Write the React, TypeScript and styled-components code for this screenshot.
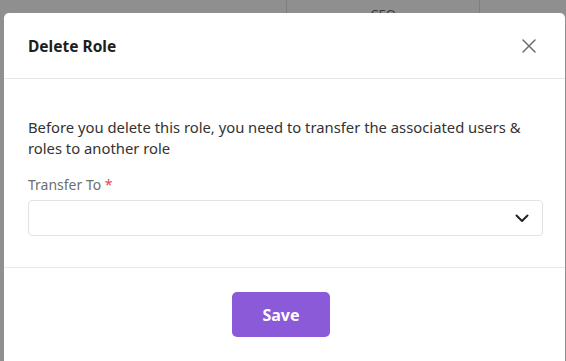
import React from "react";
import styled, { createGlobalStyle } from "styled-components";

const Global = createGlobalStyle`
  html, body { margin: 0; padding: 0; }
  body {
    width: 566px;
    height: 361px;
    overflow: hidden;
    background: #8f8f8f;
    font-family: "Noto Sans", "Open Sans", sans-serif;
  }
`;

const Page = styled.div`
  position: relative;
  width: 566px;
  height: 361px;
  overflow: hidden;
  background: #8f8f8f;
`;

const TableRow = styled.div`
  display: grid;
  grid-template-columns: 286px 193px 1fr;
  height: 40px;
`;

const Cell = styled.div<{ $divider?: boolean }>`
  border-left: ${(p) => (p.$divider ? "1px solid #7e7e7e" : "none")};
  color: #3a3a3a;
  font-size: 13px;
  text-align: center;
  padding-top: 5px;
  line-height: 18px;
`;

const Modal = styled.div`
  position: absolute;
  left: 4px;
  top: 13px;
  width: 561px;
  height: 380px;
  background: #ffffff;
  border-radius: 5px;
  display: flex;
  flex-direction: column;
`;

const Header = styled.div`
  height: 66px;
  box-sizing: border-box;
  border-bottom: 1px solid #e6e8eb;
  display: flex;
  align-items: center;
  justify-content: space-between;
  padding: 0 28px 0 24px;
`;

const Title = styled.h2`
  margin: 0;
  font-size: 15.5px;
  font-weight: 700;
  color: #1e1e1e;
`;

const CloseButton = styled.button`
  border: none;
  background: none;
  padding: 0;
  width: 16px;
  height: 16px;
  display: flex;
  align-items: center;
  justify-content: center;
  cursor: pointer;
`;

const Body = styled.div`
  padding: 38px 22px 31px 24px;
  border-bottom: 1px solid #e6e8eb;
`;

const Message = styled.p`
  margin: 0;
  font-size: 14.8px;
  line-height: 21px;
  color: #333333;
`;

const Label = styled.label`
  display: block;
  margin-top: 16px;
  font-size: 14px;
  line-height: 20px;
  color: #6e6e6e;
`;

const Required = styled.span`
  color: #e5484d;
`;

const Select = styled.div`
  margin-top: 5px;
  height: 36px;
  box-sizing: border-box;
  border: 1px solid #dfe2e7;
  border-radius: 4px;
  display: flex;
  align-items: center;
  justify-content: flex-end;
  padding-right: 13px;
`;

const Footer = styled.div`
  display: flex;
  justify-content: center;
  padding: 24px 0;
`;

const SaveButton = styled.button`
  width: 98px;
  height: 45px;
  margin-right: 7px;
  border: none;
  border-radius: 5px;
  background: #8b5ad8;
  color: #ffffff;
  font-family: inherit;
  font-size: 16px;
  font-weight: 700;
`;

export default function App() {
  return (
    <>
      <Global />
      <Page>
        <TableRow>
          <Cell />
          <Cell $divider>CEO</Cell>
          <Cell $divider />
        </TableRow>
        <Modal>
          <Header>
            <Title>Delete Role</Title>
            <CloseButton aria-label="Close">
              <svg width="14" height="14" viewBox="0 0 14 14" fill="none">
                <path d="M1 1L13 13M13 1L1 13" stroke="#6b6f76" strokeWidth="1.5" strokeLinecap="round" />
              </svg>
            </CloseButton>
          </Header>
          <Body>
            <Message>
              Before you delete this role, you need to transfer the associated users &amp; roles to another role
            </Message>
            <Label>
              Transfer To <Required>*</Required>
            </Label>
            <Select>
              <svg width="14" height="9" viewBox="0 0 14 9" fill="none">
                <path d="M1.5 1.5L7 7L12.5 1.5" stroke="#222" strokeWidth="2" strokeLinecap="round" strokeLinejoin="round" />
              </svg>
            </Select>
          </Body>
          <Footer>
            <SaveButton>Save</SaveButton>
          </Footer>
        </Modal>
      </Page>
    </>
  );
}
